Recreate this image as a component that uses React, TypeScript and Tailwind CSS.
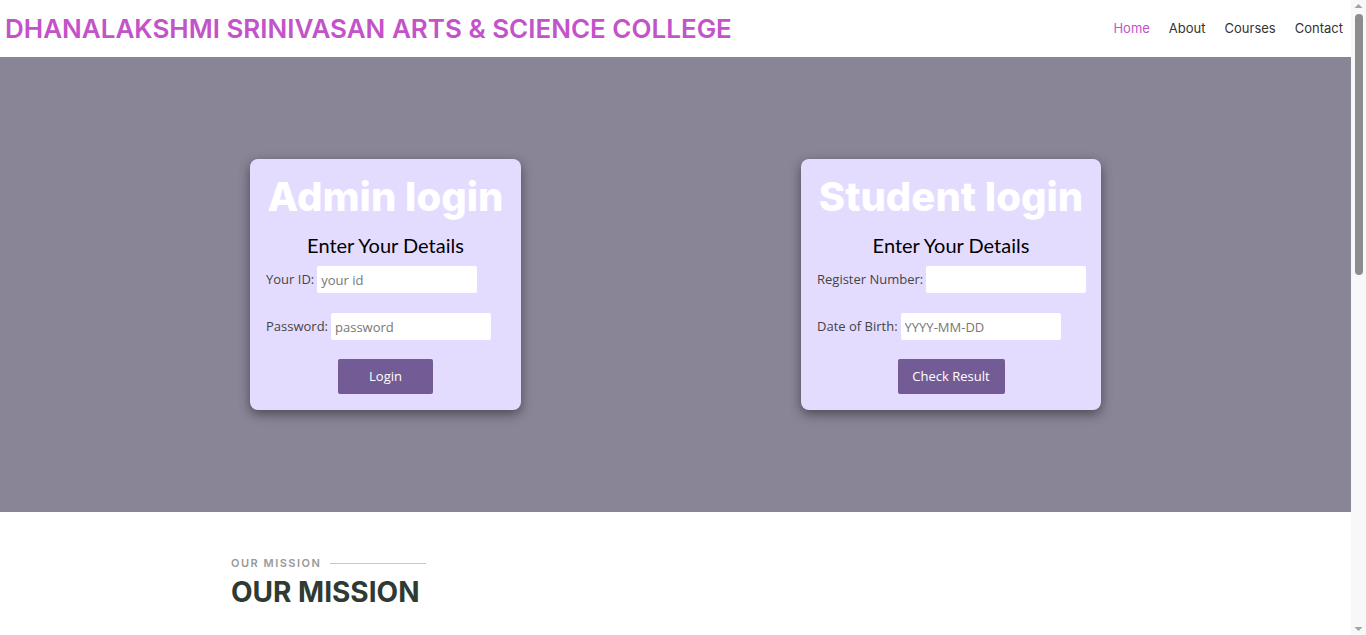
import React from "react";

const poppins = { fontFamily: "Inter, 'Noto Sans', sans-serif" };

const Field: React.FC<{ label: string; placeholder: string }> = ({ label, placeholder }) => (
  <div className="flex items-center text-[13px] text-[#444] font-['Open_Sans',sans-serif]">
    <span className="mr-[3px] whitespace-nowrap shrink-0">{label}</span>
    <input
      className="w-[160px] shrink-0 h-[27px] bg-white rounded-[2px] px-[4px] text-[13px] text-[#444] placeholder:text-[#777] outline-none"
      placeholder={placeholder}
    />
  </div>
);

const LoginCard: React.FC<{
  title: string;
  width: string;
  fields: { label: string; placeholder: string }[];
  button: string;
  buttonWidth: string;
}> = ({ title, width, fields, button, buttonWidth }) => (
  <div
    className={`${width} bg-[#e4dcff] rounded-[8px] shadow-[0_4px_12px_rgba(0,0,0,0.45)] px-[16px] pt-[14px] pb-[16px] flex flex-col`}
  >
    <h1 className="text-[40px] leading-[48px] font-extrabold text-white text-center whitespace-nowrap font-['Inter',sans-serif]">
      {title}
    </h1>
    <h2 className="mt-[12px] text-[20px] leading-[24px] text-black text-center font-['Lato',sans-serif]">
      Enter Your Details
    </h2>
    <div className="mt-[9px] flex flex-col gap-[20px]">
      {fields.map((f) => (
        <Field key={f.label} label={f.label} placeholder={f.placeholder} />
      ))}
    </div>
    <button
      className={`mt-[19px] self-center ${buttonWidth} h-[35px] bg-[#735c96] text-white text-[13px] rounded-[2px] font-['Open_Sans',sans-serif]`}
    >
      {button}
    </button>
  </div>
);

// browser-style scrollbar drawn at the right edge
const ScrollBar = () => (
  <div className="w-[15px] h-[635px] shrink-0 bg-[#f8f8f8] flex flex-col items-center">
    <svg width="15" height="13" viewBox="0 0 15 13">
      <path d="M3.5 8 L7.5 4 L11.5 8 Z" fill="#a3a3a3" />
    </svg>
    <div className="mt-[1px] w-[8px] h-[261px] rounded-full bg-[#8c8c8c]" />
    <div className="flex-1" />
    <svg width="15" height="13" viewBox="0 0 15 13">
      <path d="M3.5 5 L7.5 9 L11.5 5 Z" fill="#a3a3a3" />
    </svg>
  </div>
);

export default function App() {
  return (
    <div className="flex h-[635px] overflow-hidden">
      <div className="flex-1 min-w-0 min-h-[1480px] bg-white">
        <header className="h-[57px] flex items-center justify-between pl-[5px] pr-[8px]">
          <div className="text-[26px] font-semibold text-[#c353c9] whitespace-nowrap" style={poppins}>
            DHANALAKSHMI SRINIVASAN ARTS &amp; SCIENCE COLLEGE
          </div>
          <nav className="flex gap-[19px] text-[13px] text-[#333]" style={poppins}>
            <a className="text-[#c353c9]">Home</a>
            <a>About</a>
            <a>Courses</a>
            <a>Contact</a>
          </nav>
        </header>

        <section className="h-[455px] bg-[#8a8497] flex items-center pl-[250px] gap-[280px]">
          <LoginCard
            title="Admin login"
            width="w-[271px]"
            fields={[
              { label: "Your ID:", placeholder: "your id" },
              { label: "Password:", placeholder: "password" },
            ]}
            button="Login"
            buttonWidth="w-[95px]"
          />
          <LoginCard
            title="Student login"
            width="w-[300px]"
            fields={[
              { label: "Register Number:", placeholder: "" },
              { label: "Date of Birth:", placeholder: "YYYY-MM-DD" },
            ]}
            button="Check Result"
            buttonWidth="w-[107px]"
          />
        </section>

        <section className="pl-[231px] pt-[43px]">
          <div className="flex items-center gap-[9px]">
            <span
              className="text-[11px] font-semibold tracking-[1.5px] text-[#999]"
              style={poppins}
            >
              OUR MISSION
            </span>
            <span className="w-[96px] h-px bg-[#a6dcb0]" />
          </div>
          <h2
            className="mt-[2px] text-[28px] leading-[36px] font-bold text-[#2f3a33]"
            style={poppins}
          >
            OUR MISSION
          </h2>
        </section>
      </div>
      <ScrollBar />
    </div>
  );
}
